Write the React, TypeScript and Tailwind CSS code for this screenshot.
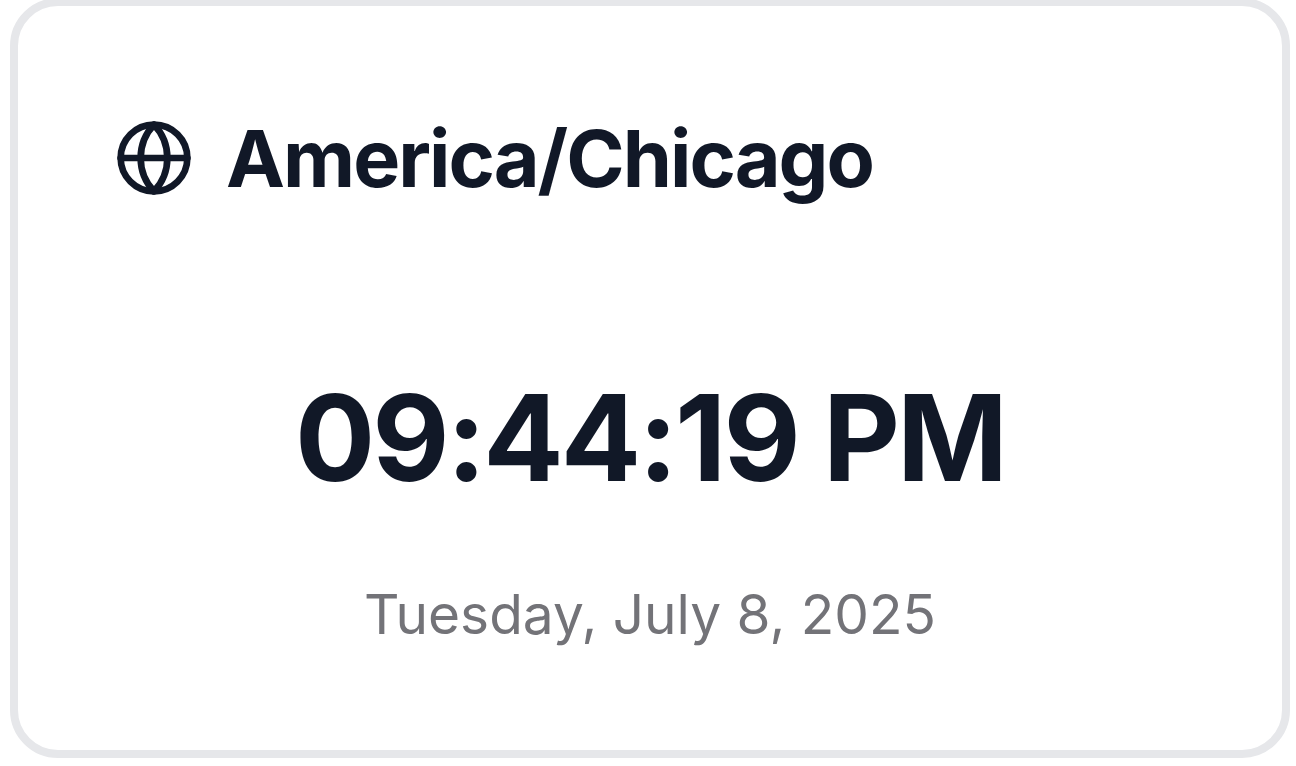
import { Globe } from "lucide-react";

interface ClockCardProps {
	timezone: string;
	time: string;
	date: string;
}

function ClockCard({ timezone, time, date }: ClockCardProps) {
	return (
		<section className="-mt-0.5 ml-2.5 mr-1.5 rounded-[48px] border-8 border-[#e6e7ea] bg-white p-24 text-[#111827]">
			<header className="flex items-center gap-8">
				<Globe size={80} className="shrink-0" aria-hidden="true" />
				<h2 className="whitespace-nowrap text-[79px] leading-[112px] font-bold tracking-tight">
					{timezone}
				</h2>
			</header>

			<div className="mt-38 text-center">
				<p className="whitespace-nowrap text-[119px] leading-[144px] font-bold tracking-tight">
					{time}
				</p>
				<p className="mt-16 text-[55px] leading-[80px] text-[#737378]">
					{date}
				</p>
			</div>
		</section>
	);
}

export default function App() {
	return (
		<main className="flow-root bg-white font-['Inter',sans-serif]">
			<ClockCard
				timezone="America/Chicago"
				time="09:44:19 PM"
				date="Tuesday, July 8, 2025"
			/>
		</main>
	);
}
